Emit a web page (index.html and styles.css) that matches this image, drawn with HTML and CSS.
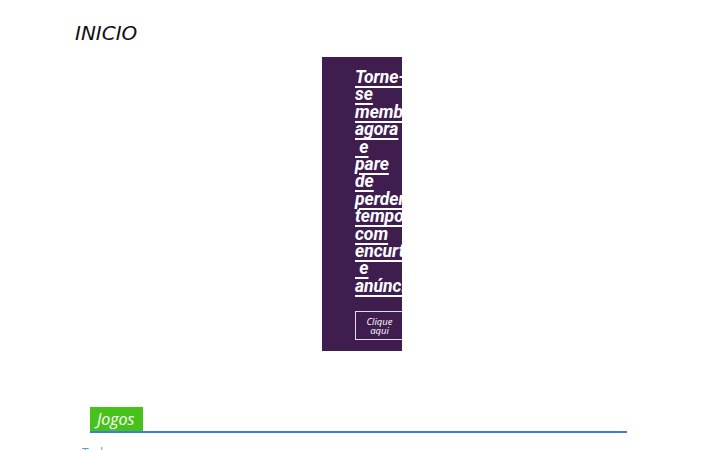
FILE: index.html
```html
<!DOCTYPE html>
<html lang="pt">
<head>
<meta charset="utf-8">
<title>Inicio</title>
<link rel="stylesheet" href="styles.css">
</head>
<body>
<div class="page">
  <h1 class="title">INICIO</h1>
  <div class="promo">
    <h2 class="promo-heading"><a href="#">Torne-<br>se<br>membro<br>agora<br>&nbsp;e<br>pare<br>de<br>perder<br>tempo<br>com<br>encurtadores<br>&nbsp;e<br>anúncios</a></h2>
    <a class="promo-btn" href="#">Clique<br>aqui</a>
  </div>
  <div class="section">
    <div class="section-head"><span class="tab">Jogos</span></div>
    <div class="section-sub">Todos</div>
  </div>
</div>
</body>
</html>
```

FILE: styles.css
```css
html, body {
  margin: 0;
  padding: 0;
  background: #ffffff;
}
.page {
  width: 720px;
  height: 450px;
  overflow: hidden;
}
.title {
  margin: 21px 0 0 75px;
  font-family: "DejaVu Sans", sans-serif;
  font-style: italic;
  font-weight: normal;
  font-size: 20px;
  line-height: 24px;
  color: #111111;
}
.promo {
  margin: 12px 0 0 322px;
  width: 80px;
  height: 294px;
  box-sizing: border-box;
  padding: 12px 0 0 33px;
  background: #3f1d4f;
  overflow: hidden;
}
.promo-heading {
  margin: 0;
  font-family: Roboto, sans-serif;
  font-style: italic;
  font-weight: bold;
  font-size: 17.5px;
  line-height: 17.4px;
  white-space: nowrap;
}
.promo-heading a {
  color: #ffffff;
  text-decoration: underline;
  text-decoration-thickness: 1.5px;
  text-underline-offset: 2.5px;
}
.promo-btn {
  display: flex;
  align-items: center;
  justify-content: center;
  margin-top: 16px;
  width: 49px;
  height: 29px;
  box-sizing: border-box;
  border: 1.5px solid #e2dae9;
  color: #ffffff;
  text-decoration: none;
  text-align: center;
  font-family: "Open Sans", sans-serif;
  font-style: italic;
  font-size: 9.5px;
  line-height: 9px;
}
.section {
  margin: 56px 0 0 90px;
  width: 537px;
}
.section-head {
  display: flex;
  border-bottom: 2px solid #3a80d8;
}
.tab {
  display: block;
  height: 24px;
  padding: 0 8px 0 7px;
  background: #47c21a;
  color: #ffffff;
  font-family: "Open Sans", sans-serif;
  font-style: italic;
  font-size: 16px;
  line-height: 24px;
}
.section-sub {
  margin: 12px 0 0 -8px;
  font-family: "Open Sans", sans-serif;
  font-size: 12px;
  line-height: 16px;
  color: #3fa9d9;
}
```
